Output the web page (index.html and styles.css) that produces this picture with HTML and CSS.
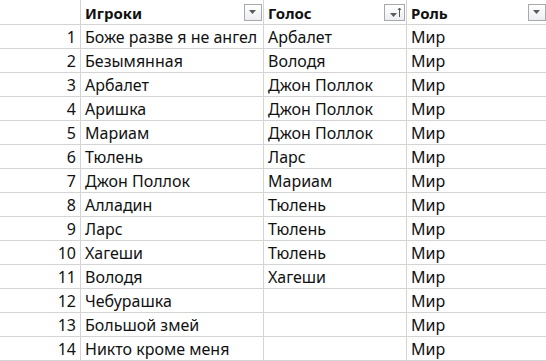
FILE: index.html
```html
<!DOCTYPE html>
<html>
<head>
<meta charset="utf-8">
<link rel="stylesheet" href="styles.css">
</head>
<body>
<div class="sheet">
  <div class="cell num head"></div>
  <div class="cell head"><span class="label">Игроки</span><span class="filter"><svg width="9" height="5" viewBox="0 0 9 5"><path d="M0 0h7L3.5 4z" fill="#5a5a5a"/></svg></span></div>
  <div class="cell head"><span class="label">Голос</span><span class="filter sort"><svg width="14" height="12" viewBox="0 0 14 12"><path d="M2 6h7L5.5 10z" fill="#5a5a5a"/><path d="M11.5 1v9" stroke="#5a5a5a" stroke-width="1"/><path d="M10 3l1.5-2 1.5 2" fill="none" stroke="#5a5a5a" stroke-width="1"/></svg></span></div>
  <div class="cell head last"><span class="label">Роль</span><span class="filter"><svg width="9" height="5" viewBox="0 0 9 5"><path d="M0 0h7L3.5 4z" fill="#5a5a5a"/></svg></span></div>

  <div class="cell num">1</div><div class="cell">Боже разве я не ангел</div><div class="cell">Арбалет</div><div class="cell last">Мир</div>
  <div class="cell num">2</div><div class="cell">Безымянная</div><div class="cell">Володя</div><div class="cell last">Мир</div>
  <div class="cell num">3</div><div class="cell">Арбалет</div><div class="cell">Джон Поллок</div><div class="cell last">Мир</div>
  <div class="cell num">4</div><div class="cell">Аришка</div><div class="cell">Джон Поллок</div><div class="cell last">Мир</div>
  <div class="cell num">5</div><div class="cell">Мариам</div><div class="cell">Джон Поллок</div><div class="cell last">Мир</div>
  <div class="cell num">6</div><div class="cell">Тюлень</div><div class="cell">Ларс</div><div class="cell last">Мир</div>
  <div class="cell num">7</div><div class="cell">Джон Поллок</div><div class="cell">Мариам</div><div class="cell last">Мир</div>
  <div class="cell num">8</div><div class="cell">Алладин</div><div class="cell">Тюлень</div><div class="cell last">Мир</div>
  <div class="cell num">9</div><div class="cell">Ларс</div><div class="cell">Тюлень</div><div class="cell last">Мир</div>
  <div class="cell num">10</div><div class="cell">Хагеши</div><div class="cell">Тюлень</div><div class="cell last">Мир</div>
  <div class="cell num">11</div><div class="cell">Володя</div><div class="cell">Хагеши</div><div class="cell last">Мир</div>
  <div class="cell num">12</div><div class="cell">Чебурашка</div><div class="cell"></div><div class="cell last">Мир</div>
  <div class="cell num">13</div><div class="cell">Большой змей</div><div class="cell"></div><div class="cell last">Мир</div>
  <div class="cell num">14</div><div class="cell">Никто кроме меня</div><div class="cell"></div><div class="cell last">Мир</div>
</div>
</body>
</html>
```
FILE: styles.css
```css
html, body {
  margin: 0;
  padding: 0;
  background: #fff;
}
.sheet {
  display: grid;
  grid-template-columns: 81px 183px 143px 140px;
  grid-template-rows: 25px repeat(14, 24px);
  font-family: "Noto Sans", "Liberation Sans", sans-serif;
  font-size: 16px;
  color: #111;
}
.cell {
  box-sizing: border-box;
  border-right: 1px solid #d4d4d4;
  border-bottom: 1px solid #d4d4d4;
  display: flex;
  align-items: flex-end;
  padding: 0 4px 0 4px;
  line-height: 22px;
  white-space: nowrap;
  overflow: hidden;
}
.cell.last {
  border-right: none;
}
.num {
  justify-content: flex-end;
}
.head {
  font-weight: bold;
  font-size: 15px;
  justify-content: space-between;
  padding-right: 1px;
}
.filter {
  box-sizing: border-box;
  width: 18px;
  height: 17px;
  align-self: center;
  border: 1px solid #a9a9a9;
  background: linear-gradient(#ffffff, #eceef2);
  display: flex;
  align-items: center;
  justify-content: center;
  padding-top: 1px;
}
.filter.sort {
  width: 21px;
}
```
